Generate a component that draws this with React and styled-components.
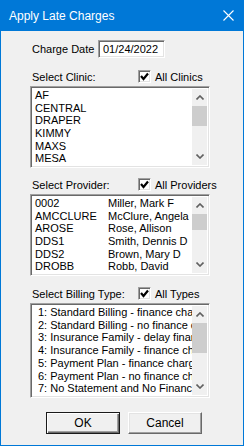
import React from 'react';
import styled, { createGlobalStyle } from 'styled-components';

const GlobalStyle = createGlobalStyle`
  html, body {
    margin: 0;
    padding: 0;
    background: #f0f0f0;
  }
  * {
    box-sizing: border-box;
  }
`;

// Window frame
const Window = styled.div`
  width: 244px;
  height: 446px;
  display: flex;
  flex-direction: column;
  border: 1px solid #0078d7;
  border-top: none;
  background: #f0f0f0;
  font-family: 'Liberation Sans', Arial, sans-serif;
  font-size: 11px;
  color: #000;
`;

const TitleBar = styled.div`
  height: 31px;
  margin: 0 -1px;
  background: #0078d7;
  display: flex;
  align-items: center;
  justify-content: space-between;
  padding: 0 10px 0 9px;
`;

const Title = styled.span`
  color: #fff;
  font-size: 12px;
`;

const CloseIcon = styled.svg`
  width: 11px;
  height: 11px;
  display: block;
`;

const Body = styled.div`
  flex: 1;
  display: flex;
  flex-direction: column;
  padding: 9px 0 0 29px;
`;

const DateRow = styled.div`
  display: grid;
  grid-template-columns: 68px 67px;
  align-items: center;
  height: 18px;
`;

const Label = styled.span`
  padding-left: 2px;
  white-space: nowrap;
`;

const sunken = `
  border: 1px solid;
  border-color: #a0a0a0 #ffffff #ffffff #a0a0a0;
  box-shadow: inset 1px 1px 0 #696969, inset -1px -1px 0 #e3e3e3;
  background: #fff;
`;

const DateInput = styled.div`
  ${sunken}
  height: 18px;
  padding: 2px 0 0 4px;
  line-height: 13px;
`;

const SectionHead = styled.div`
  display: grid;
  grid-template-columns: 104px 13px auto;
  column-gap: 4px;
  align-items: center;
  height: 15px;
  margin-top: ${p => p.$gap}px;
`;

const CheckBox = styled.div`
  ${sunken}
  width: 13px;
  height: 13px;
  display: flex;
  align-items: center;
  justify-content: center;
`;

const ListBox = styled.div`
  ${sunken}
  width: 180px;
  height: ${p => p.$h}px;
  margin-top: 2px;
  padding: 2px;
  display: flex;
`;

const Rows = styled.div`
  flex: 1;
  overflow: hidden;
  display: flex;
  flex-direction: column;
`;

const Row = styled.div`
  height: 13px;
  line-height: 13px;
  white-space: nowrap;
  overflow: hidden;
  padding-left: ${p => (p.$indent ? 5 : 2)}px;
  display: grid;
  grid-template-columns: ${p => (p.$cols ? '73px auto' : 'auto')};
`;

const ScrollBar = styled.div`
  width: 15px;
  display: flex;
  flex-direction: column;
  background: #f0f0f0;
`;

const Arrow = styled.div`
  height: 17px;
  display: flex;
  align-items: center;
  justify-content: center;
`;

const Track = styled.div`
  flex: 1;
  display: flex;
  flex-direction: column;
`;

const Thumb = styled.div`
  height: ${p => p.$h}px;
  background: #cdcdcd;
`;

const ButtonRow = styled.div`
  display: flex;
  gap: 8px;
  margin: 14px 0 0 16px;
`;

const Button = styled.div`
  width: 74px;
  height: 22px;
  display: flex;
  align-items: center;
  justify-content: center;
  background: #f0f0f0;
  border: 1px solid;
  border-color: ${p => (p.$default ? '#1a1a1a' : '#ffffff #696969 #696969 #ffffff')};
  box-shadow: ${p =>
    p.$default
      ? 'inset 1px 1px 0 #ffffff, inset -1px -1px 0 #696969, inset -2px -2px 0 #a0a0a0'
      : 'inset -1px -1px 0 #a0a0a0, inset 1px 1px 0 #e3e3e3'};
  font-size: 12px;
`;

const Chevron = ({ down }) => (
  <svg width="8" height="5" viewBox="0 0 8 5">
    <polyline
      points={down ? '0.5,0.5 4,4 7.5,0.5' : '0.5,4.5 4,1 7.5,4.5'}
      fill="none"
      stroke="#606060"
      strokeWidth="1.6"
    />
  </svg>
);

const Check = () => (
  <svg width="9" height="9" viewBox="0 0 9 9">
    <polyline points="1,4 3.5,7 8,1.5" fill="none" stroke="#000" strokeWidth="2.2" />
  </svg>
);

const List = ({ h, thumb, children }) => (
  <ListBox $h={h}>
    <Rows>{children}</Rows>
    <ScrollBar>
      <Arrow><Chevron /></Arrow>
      <Track><Thumb $h={thumb} /></Track>
      <Arrow><Chevron down /></Arrow>
    </ScrollBar>
  </ListBox>
);

const Section = ({ label, check, gap }) => (
  <SectionHead $gap={gap}>
    <Label>{label}</Label>
    <CheckBox><Check /></CheckBox>
    <span>{check}</span>
  </SectionHead>
);

const clinics = ['AF', 'CENTRAL', 'DRAPER', 'KIMMY', 'MAXS', 'MESA'];

const providers = [
  ['0002', 'Miller, Mark F'],
  ['AMCCLURE', 'McClure, Angela'],
  ['AROSE', 'Rose, Allison'],
  ['DDS1', 'Smith, Dennis D'],
  ['DDS2', 'Brown, Mary D'],
  ['DROBB', 'Robb, David'],
];

const billingTypes = [
  '1: Standard Billing - finance charge',
  '2: Standard Billing - no finance charge',
  '3: Insurance Family - delay finance charge',
  '4: Insurance Family - finance charge',
  '5: Payment Plan - finance charge',
  '6: Payment Plan - no finance charge',
  '7: No Statement and No Finance Charge',
];

export default function App() {
  return (
    <>
      <GlobalStyle />
      <Window>
        <TitleBar>
          <Title>Apply Late Charges</Title>
          <CloseIcon viewBox="0 0 11 11">
            <path d="M0.5 0.5 L10.5 10.5 M10.5 0.5 L0.5 10.5" stroke="#fff" strokeWidth="1.1" />
          </CloseIcon>
        </TitleBar>
        <Body>
          <DateRow>
            <Label>Charge Date</Label>
            <DateInput>01/24/2022</DateInput>
          </DateRow>

          <Section label="Select Clinic:" check="All Clinics" gap={11} />
          <List h={82} thumb={20}>
            {clinics.map(c => (
              <Row key={c}>{c}</Row>
            ))}
          </List>

          <Section label="Select Provider:" check="All Providers" gap={9} />
          <List h={82} thumb={16}>
            {providers.map(([id, name]) => (
              <Row key={id} $cols>
                <span>{id}</span>
                <span>{name}</span>
              </Row>
            ))}
          </List>

          <Section label="Select Billing Type:" check="All Types" gap={10} />
          <List h={95} thumb={30}>
            {billingTypes.map(t => (
              <Row key={t} $indent>{t}</Row>
            ))}
          </List>

          <ButtonRow>
            <Button $default>OK</Button>
            <Button>Cancel</Button>
          </ButtonRow>
        </Body>
      </Window>
    </>
  );
}
